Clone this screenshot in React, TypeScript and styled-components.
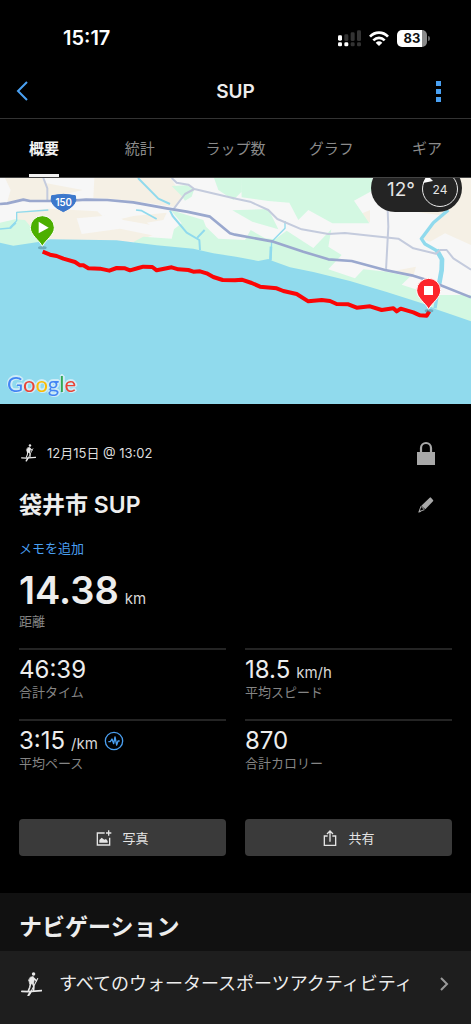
import React from 'react';
import styled, { createGlobalStyle } from 'styled-components';

const GlobalStyle = createGlobalStyle`
  *, *::before, *::after { box-sizing: border-box; }
  body {
    margin: 0;
    background: #000;
    color: #ededed;
    font-family: Inter, "Noto Sans CJK JP", sans-serif;
  }
  h1, h2, h3, p, dl, dd, dt { margin: 0; font: inherit; }
  button { font: inherit; color: inherit; background: none; border: 0; padding: 0; cursor: pointer; }
  a { color: inherit; text-decoration: none; }
  svg { display: block; flex: none; }
`;

const Page = styled.div`
  min-height: 100vh;
  display: flex;
  flex-direction: column;
  overflow-x: hidden;
`;

const StatusBar = styled.div`
  height: 64px;
  padding: 12px 41px 0 63px;
  display: flex;
  align-items: center;
  justify-content: space-between;
`;

const Clock = styled.span`
  font-size: 20px;
  line-height: 24px;
  font-weight: 600;
  color: #fff;
`;

const StatusIcons = styled.div`
  display: flex;
  align-items: center;
  gap: 8px;
`;

const Battery = styled.div`
  position: relative;
  width: 30px;
  height: 17px;
  border-radius: 5px;
  background: linear-gradient(90deg, #fff 83%, #8a8a8a 83%);
  color: #111;
  font-size: 13px;
  line-height: 17px;
  font-weight: 700;
  text-align: center;
  margin-right: 3px;
  &::after {
    content: '';
    position: absolute;
    right: -3px;
    top: 6px;
    width: 2px;
    height: 5px;
    border-radius: 0 2px 2px 0;
    background: #666;
  }
`;

const Header = styled.header`
  height: 55px;
  padding: 0 29px 0 16px;
  display: grid;
  grid-template-columns: 1fr auto 1fr;
  align-items: center;
  border-bottom: 1px solid #333;
`;

const HeaderButton = styled.button<{ $end?: boolean }>`
  height: 24px;
  display: flex;
  align-items: center;
  justify-self: ${(p) => (p.$end ? 'end' : 'start')};
  color: #4aa1f3;
`;

const HeaderTitle = styled.h1`
  padding: 2px 0 0 13px;
  font-size: 19px;
  line-height: 24px;
  font-weight: 600;
`;

const Tabs = styled.nav`
  margin: 0 -4px;
  display: grid;
  grid-template-columns: repeat(5, 1fr);
  justify-items: center;
  border-bottom: 1px solid #444;
`;

const Tab = styled.button<{ $active?: boolean }>`
  height: 58px;
  border-bottom: 3px solid ${(p) => (p.$active ? '#f2f2f2' : 'transparent')};
  padding-top: 4px;
  font-size: 15px;
  line-height: 22px;
  font-weight: ${(p) => (p.$active ? 700 : 400)};
  color: ${(p) => (p.$active ? '#f2f2f2' : '#8b8b8b')};
`;

const MapBox = styled.section`
  position: relative;
  overflow: hidden;
  > svg { width: 100%; height: auto; }
`;

const Weather = styled.div`
  position: absolute;
  top: -14px;
  right: 9px;
  height: 48px;
  padding: 2px 4px 0 16px;
  display: flex;
  align-items: center;
  gap: 7px;
  border-radius: 24px;
  background: #242424;
  color: #e6e6e6;
  font-size: 19px;
`;

const Wind = styled.span`
  position: relative;
  width: 36px;
  height: 36px;
  display: grid;
  place-items: center;
  border: 1px solid #e8e8e8;
  border-radius: 50%;
  font-size: 12px;
  svg { position: absolute; left: 0; top: 3px; }
`;

const GoogleMark = styled.a`
  position: absolute;
  left: 7px;
  bottom: 6px;
  font-family: Lato, sans-serif;
  font-size: 22px;
  line-height: 28px;
  filter: drop-shadow(1px 1px 0 #cdebf7) drop-shadow(-1px -1px 0 #cdebf7) drop-shadow(1px -1px 0 #cdebf7);
`;

const Letter = styled.span<{ $color: string }>`
  color: ${(p) => p.$color};
`;

const Summary = styled.main`
  padding: 36px 19px 37px;
`;

const Row = styled.div`
  display: flex;
  align-items: center;
  justify-content: space-between;
`;

const DateLine = styled.p`
  display: flex;
  align-items: center;
  gap: 11px;
  padding-left: 2px;
  font-size: 13px;
  line-height: 24px;
  color: #dcdcdc;
`;

const IconButton = styled.button`
  width: 24px;
  height: 26px;
  margin-right: 14px;
  display: grid;
  place-items: center;
  color: #a8a8a8;
`;

const TitleRow = styled(Row)`
  margin-top: 23px;
`;

const ActivityTitle = styled.h2`
  font-size: 23px;
  line-height: 32px;
  font-weight: 600;
`;

const MemoLink = styled.a`
  display: block;
  width: max-content;
  margin-top: 17px;
  font-size: 13px;
  line-height: 20px;
  && { color: #4a9ff0; }
`;

const Metric = styled.div<{ $large?: boolean }>`
  display: flex;
  flex-direction: column-reverse;
  ${(p) =>
    p.$large
      ? 'padding-bottom: 19px; margin-top: 9px;'
      : 'height: 71px; justify-content: flex-end; border-top: 2px solid #242424; padding-top: 6px;'}
`;

const MetricValue = styled.dd<{ $large?: boolean }>`
  display: flex;
  align-items: baseline;
  gap: 6px;
  font-size: ${(p) => (p.$large ? 38 : 24)}px;
  line-height: ${(p) => (p.$large ? 46 : 28)}px;
  font-weight: ${(p) => (p.$large ? 600 : 400)};
  button { align-self: center; }
`;

const Unit = styled.span`
  font-size: 15px;
  line-height: 20px;
  font-weight: 400;
  color: #d8d8d8;
`;

const MetricLabel = styled.dt`
  font-size: 13px;
  line-height: 16px;
  color: #858585;
`;

const TwoColumns = styled.div`
  display: grid;
  grid-template-columns: 1fr 1fr;
  column-gap: 19px;
`;

const MetricList = styled(TwoColumns).attrs({ as: 'dl' })``;

const Actions = styled(TwoColumns)`
  margin-top: 29px;
`;

const ActionButton = styled.button`
  height: 37px;
  display: flex;
  align-items: center;
  justify-content: center;
  gap: 10px;
  border-radius: 4px;
  background: #3a3a3a;
  font-size: 13px;
  color: #e4e4e4;
`;

const Navigation = styled.section`
  flex: 1;
  display: flex;
  flex-direction: column;
  background: #1e1e1e;
`;

const NavHeading = styled.h2`
  padding: 18px 19px 7px;
  background: #111;
  font-size: 23px;
  line-height: 33px;
  font-weight: 600;
`;

const NavRow = styled.a`
  height: 66px;
  padding: 0 22px 0 21px;
  display: flex;
  align-items: center;
  font-size: 18px;
  line-height: 24px;
  span { flex: 1; padding-left: 17px; white-space: nowrap; }
`;

function PaddlerIcon({ size }: { size: number }) {
  return (
    <svg width={size} height={size * 1.15} viewBox="0 0 60 70" fill="none" stroke="#e8e8e8" strokeWidth="3.5" strokeLinecap="round" aria-hidden="true">
      <circle cx="36" cy="6" r="5" fill="#e8e8e8" stroke="none" />
      <path d="M27 15 L35 13 L38 22 L36 34 L25 35 L22 24 Z" fill="#e8e8e8" strokeWidth="2" />
      <path d="M36 18 L44 25 M27 34 L25 44 L21 54 M34 34 L37 43 L36 54" strokeWidth="4.5" />
      <path d="M48 19 L25 64" strokeWidth="3" />
      <path d="M27 58 L21 68" strokeWidth="6" />
      <path d="M2 56 L20 57 L30 56 L59 54" strokeWidth="5" />
    </svg>
  );
}

function MapDrawing() {
  return (
    <svg viewBox="0 24 1413 678" role="img" aria-label="ルート">
      <rect y="24" width="1413" height="678" fill="#f7f7f7" />
      <g fill="#f5f0e5">
        <path d="M15 24H128L140 40L248 60L158 82L150 90H75L22 94L32 60Z" />
        <path d="M283 24H512L548 80L528 112L440 98L330 86L280 84Z" />
        <path d="M50 124L150 116L292 124L325 156L400 138L500 128L490 150L440 158L480 185L410 216L150 212L95 170L50 150Z" />
        <path d="M1262 205L1340 115L1413 60V225L1335 190L1290 215Z" />
        <path d="M1370 24H1413V150L1250 125Z" />
        <path d="M1075 135L1110 120V158ZM1165 306L1248 290L1240 318Z" />
      </g>
      <path d="M230 145L345 135L370 150L525 178L515 208L360 176L245 192Z" fill="#f7f7f7" />
      <g fill="#d3f8e2">
        <path d="M0 158L45 148L75 150L100 180L130 230H0Z" />
        <path d="M515 48L560 46L583 57L575 80L555 92L545 78Z" />
        <path d="M642 24H725V65L700 90L655 60Z" />
        <path d="M723 24H1115L1130 55L1062 92L1108 160H997L925 120L895 150L868 98L805 93L725 82Z" />
        <path d="M512 120L610 150L618 170L655 206L735 210L752 180L795 205L825 208L860 182L940 234L994 178L985 230L1025 255L985 298L1065 325L1090 298L1160 305L1230 320L1205 344L1300 375H1413V460H708L400 216L430 200L515 206L522 178L545 160Z" />
        <path d="M697 121L805 117L835 178L757 155Z" />
      </g>
      <path d="M0 218L40 227L120 215L150 208L350 211L470 226L580 236L640 250L708 260L775 273L805 267L816 272L870 292L940 306L1050 333L1160 366L1280 404L1308 418L1350 432L1413 454V702H0Z" fill="#90daed" />
      <g fill="none" stroke="#90daed" strokeLinejoin="round">
        <path d="M0 177L32 174L50 152V127L145 120" strokeWidth="4" />
        <path d="M30 174L47 158" strokeWidth="7" />
        <path d="M414 24L475 86L510 102" strokeWidth="6" />
        <path d="M408 120L425 122L470 147" strokeWidth="5" />
        <path d="M510 122L518 138L560 188L598 210L600 240M592 203L614 180" strokeWidth="6" />
        <path d="M812 270L815 215L855 175V153" strokeWidth="4" />
        <path d="M811 271L813 230" strokeWidth="8" />
        <path d="M1345 120L1300 158L1264 206L1275 222L1310 242L1326 268L1325 300L1316 350L1305 415" strokeWidth="10" />
        <path d="M1310 240L1326 268L1325 300L1316 350" strokeWidth="14" />
      </g>
      <g fill="none" stroke="#c4cbdd" strokeWidth="6" strokeLinejoin="round">
        <path d="M130 24L142 55V92M515 24L530 38L565 44L583 57L708 86L750 95L805 120L832 147L905 178L985 192L1035 189L1195 206L1240 235L1308 251L1320 240L1340 240L1360 265L1413 299" />
        <path d="M583 57L555 72L520 118M1163 120L1165 170L1158 300" />
      </g>
      <path d="M0 102L22 100L70 89L90 93H200L258 89L322 90L400 97L500 115L560 125L630 140L690 190L705 194L820 215L910 245L985 268L1055 273L1155 300L1235 316L1290 333L1413 382" fill="none" stroke="#9aa8ce" strokeWidth="8" strokeLinejoin="round" />
      <path d="M155 77Q190 69 226 77Q236 105 190 125Q145 105 155 77Z" fill="#3c78cc" stroke="#3c78cc" strokeWidth="3" />
      <text x="191" y="108" fontFamily="Inter, sans-serif" fontSize="29" fontWeight="600" fill="#fff" textAnchor="middle">150</text>
      <path d="M128 245L150 254L170 258L190 266L225 276L240 286L250 286L265 295L300 296L328 302L350 294L375 295L390 301L415 294L430 290L457 291L470 301L500 295L515 292L535 298L565 300L580 305L600 304L620 310L640 321L668 330L705 331L725 329L755 339L780 350L830 355L850 363L890 372L925 394L965 390L990 393L1010 402L1045 403L1070 413L1110 409L1145 420L1180 415L1190 424L1202 416L1240 427L1260 436L1280 437L1288 424" fill="none" stroke="#fb0606" strokeWidth="12" strokeLinejoin="round" />
      <ellipse cx="127" cy="233" rx="13" ry="5" fill="#4a7f91" opacity=".5" />
      <path d="M127 229C118 211 91 195 91 173A36 36 0 0 1 163 173C163 195 136 211 127 229Z" fill="#4caf00" stroke="#fff" strokeWidth="3" />
      <path d="M116 155L146 173L116 190Z" fill="#fff" />
      <ellipse cx="1287" cy="422" rx="13" ry="5" fill="#4a7f91" opacity=".5" />
      <path d="M1286 418C1277 399 1250 384 1250 361A36 36 0 0 1 1322 361C1322 384 1295 399 1286 418Z" fill="#fc252c" stroke="#fff" strokeWidth="3" />
      <rect x="1272" y="348" width="27" height="27" fill="#fff" />
    </svg>
  );
}

const googleLetters: [string, string][] = [
  ['G', '#4285f4'],
  ['o', '#ea4335'],
  ['o', '#fbbc05'],
  ['g', '#4285f4'],
  ['l', '#34a853'],
  ['e', '#ea4335'],
];

const tabs = ['概要', '統計', 'ラップ数', 'グラフ', 'ギア'];

const metrics = [
  { label: '合計タイム', value: '46:39' },
  { label: '平均スピード', value: '18.5', unit: 'km/h' },
  { label: '平均ペース', value: '3:15', unit: '/km', chart: true },
  { label: '合計カロリー', value: '870' },
];

export default function App() {
  return (
    <Page>
      <GlobalStyle />
      <StatusBar>
        <Clock>15:17</Clock>
        <StatusIcons>
          <svg width="23" height="17" viewBox="0 0 69 51" aria-hidden="true">
            <g fill="#333">
              <rect x="19" y="13" width="12" height="20" rx="4" />
              <rect x="38" y="7" width="12" height="26" rx="4" />
              <rect x="57" y="1" width="12" height="32" rx="4" />
              <rect x="38" y="37" width="12" height="12" rx="4" />
              <rect x="57" y="37" width="12" height="12" rx="4" />
            </g>
            <g fill="#fff">
              <rect x="0" y="16" width="12" height="16" rx="4" />
              <rect x="0" y="37" width="12" height="12" rx="4" />
              <rect x="19" y="37" width="12" height="12" rx="4" />
            </g>
          </svg>
          <svg width="20" height="15" viewBox="0 0 60 45" fill="none" stroke="#fff" strokeWidth="8" aria-hidden="true">
            <path d="M3 17C18 1 42 1 57 17M13 28C23 18 37 18 47 28" />
            <path d="M20 35Q30 27 40 35L30 45Z" fill="#fff" stroke="none" />
          </svg>
          <Battery>83</Battery>
        </StatusIcons>
      </StatusBar>
      <Header>
        <HeaderButton aria-label="戻る">
          <svg width="12" height="20" viewBox="0 0 12 20" fill="none" stroke="currentColor" strokeWidth="2">
            <path d="M11 1L2 10L11 19" />
          </svg>
        </HeaderButton>
        <HeaderTitle>SUP</HeaderTitle>
        <HeaderButton $end aria-label="メニュー">
          <svg width="8" height="22" viewBox="0 0 8 22" fill="currentColor">
            <path d="M2 1H7V6H2ZM2 9H7V14H2ZM2 17H7V22H2Z" />
          </svg>
        </HeaderButton>
      </Header>
      <Tabs>
        {tabs.map((tab, i) => (
          <Tab key={tab} $active={i === 0}>{tab}</Tab>
        ))}
      </Tabs>
      <MapBox>
        <MapDrawing />
        <Weather>
          12°
          <Wind>
            24
            <svg width="11" height="9" viewBox="0 0 11 9" fill="#fff"><path d="M4 0L10 6L0 8Z" /></svg>
          </Wind>
        </Weather>
        <GoogleMark href="#google" aria-label="Google">
          {googleLetters.map(([char, color], i) => (
            <Letter key={i} $color={color}>{char}</Letter>
          ))}
        </GoogleMark>
      </MapBox>
      <Summary>
        <Row>
          <DateLine>
            <PaddlerIcon size={15} />
            12月15日 @ 13:02
          </DateLine>
          <IconButton aria-label="公開設定">
            <svg width="20" height="24" viewBox="0 0 20 24">
              <path d="M5 12V7A5 5 0 0 1 15 7V12" fill="none" stroke="currentColor" strokeWidth="2.2" />
              <rect x="1" y="11" width="18" height="13" fill="currentColor" />
            </svg>
          </IconButton>
        </Row>
        <TitleRow>
          <ActivityTitle>袋井市 SUP</ActivityTitle>
          <IconButton aria-label="タイトルを編集">
            <svg width="16" height="16" viewBox="0 0 48 48" fill="currentColor">
              <path d="M35 2Q37 0 39 2L45 9Q47 11 45 13L22 37L10 26Z" />
              <path d="M9 28L3 44L19 38Z" fill="none" stroke="currentColor" strokeWidth="3" />
              <path d="M1 47L4 38L10 44Z" />
            </svg>
          </IconButton>
        </TitleRow>
        <MemoLink href="#memo">メモを追加</MemoLink>
        <dl>
          <Metric $large>
            <MetricLabel>距離</MetricLabel>
            <MetricValue $large>14.38 <Unit>km</Unit></MetricValue>
          </Metric>
        </dl>
        <MetricList>
          {metrics.map((m) => (
            <Metric key={m.label}>
              <MetricLabel>{m.label}</MetricLabel>
              <MetricValue>
                {m.value}
                {m.unit && <Unit>{m.unit}</Unit>}
                {m.chart && (
                  <button aria-label="ペースの詳細">
                    <svg width="20" height="20" viewBox="0 0 60 60" fill="none" stroke="#4a9ff0" strokeWidth="4" strokeLinejoin="round">
                      <circle cx="30" cy="30" r="26" />
                      <path d="M13 32H19L24 24L29 38L33 18L38 42L42 30H47" />
                    </svg>
                  </button>
                )}
              </MetricValue>
            </Metric>
          ))}
        </MetricList>
        <Actions>
          <ActionButton>
            <svg width="16" height="16" viewBox="0 0 48 48" fill="none" stroke="currentColor" strokeWidth="4">
              <path d="M26 9H4V45H41V23M38 1V17M30 9H46" />
              <path d="M10 38V30L17 23L25 29L30 27L35 33V38Z" fill="currentColor" stroke="none" />
            </svg>
            写真
          </ActionButton>
          <ActionButton>
            <svg width="16" height="16" viewBox="0 0 48 48" fill="none" stroke="currentColor" strokeWidth="4">
              <path d="M17 18H7V46H41V18H31M24 35V5M15 12L24 3L33 12" />
            </svg>
            共有
          </ActionButton>
        </Actions>
      </Summary>
      <Navigation>
        <NavHeading>ナビゲーション</NavHeading>
        <NavRow href="#activities">
          <PaddlerIcon size={21} />
          <span>すべてのウォータースポーツアクティビティ</span>
          <svg width="9" height="14" viewBox="0 0 9 14" fill="none" stroke="#9a9a9a" strokeWidth="2">
            <path d="M1 1L7 7L1 13" />
          </svg>
        </NavRow>
      </Navigation>
    </Page>
  );
}
